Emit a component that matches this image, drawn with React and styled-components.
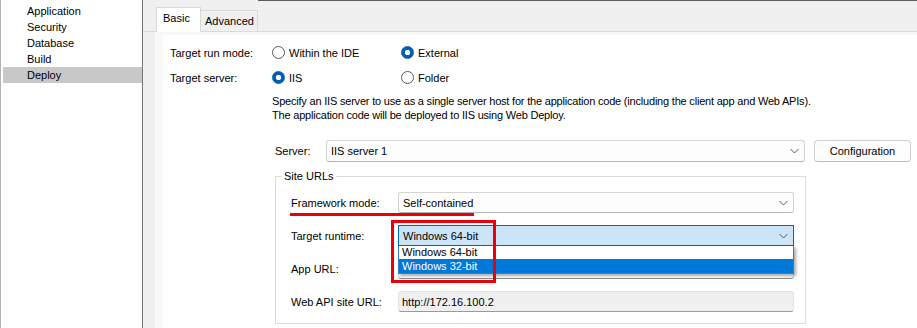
import React from 'react';
import styled, { createGlobalStyle } from 'styled-components';

const GlobalStyle = createGlobalStyle`
html, body {
  margin: 0;
  padding: 0;
}
body {
  font-family: "Liberation Sans", Arial, sans-serif;
  font-size: 11px;
  color: #000;
  background: #f0f0f0;
  overflow: hidden;
}
`;

const Page = styled.div`
display: flex;
width: 917px;
height: 328px;
`;

const Sidebar = styled.div`
flex: none;
width: 141px;
background: #fff;
border-left: 1px solid #b4b4b4;
border-right: 1px solid #767676;
padding-top: 3px;
`;

const NavItem = styled.div`
height: 16px;
line-height: 16px;
margin-left: 2px;
padding-left: 24px;
background: ${(p) => (p.$active ? '#c8c8c8' : 'transparent')};
`;

const Main = styled.div`
flex: 1;
min-width: 0;
display: flex;
flex-direction: column;
overflow: hidden;
`;

const TabStrip = styled.div`
display: flex;
align-items: flex-end;
height: 32px;
box-sizing: border-box;
padding-left: 13px;
border-bottom: 1px solid #dadada;
`;

const Tab = styled.div`
box-sizing: border-box;
position: relative;
width: ${(p) => p.$width}px;
height: ${(p) => (p.$active ? 25 : 21)}px;
margin-bottom: ${(p) => (p.$active ? -1 : 0)}px;
padding: 3px 0 0 ${(p) => p.$pad}px;
line-height: 14px;
background: ${(p) => (p.$active ? '#fff' : '#f0f0f0')};
border: 1px solid #d9d9d9;
border-bottom: none;
border-left: ${(p) => (p.$first ? '1px solid #d9d9d9' : 'none')};
`;

const StripFill = styled.div`
flex: 1;
align-self: stretch;
border-top: 1px solid #5c5c5c;
`;

const Panel = styled.div`
flex: 1;
display: flex;
margin-left: 12px;
padding: 3px 0 0 8px;
background: #f8f8f8;
`;

const Content = styled.div`
flex: 1;
background: #fff;
padding: 5px 0 0 7px;
`;

const OptionRow = styled.div`
display: grid;
grid-template-columns: 102px 129px auto;
align-items: center;
height: 25px;
`;

const Label = styled.span`
white-space: nowrap;
`;

const Radio = styled.label`
display: inline-flex;
align-items: center;
gap: 4px;
white-space: nowrap;
`;

const RadioDot = styled.span`
flex: none;
width: 13px;
height: 13px;
box-sizing: border-box;
border-radius: 50%;
border: 1px solid ${(p) => (p.$checked ? '#005fb8' : '#5a5a5a')};
background: ${(p) =>
  p.$checked ? 'radial-gradient(circle, #fff 0 2.4px, #005fb8 3px)' : '#fff'};
`;

const Description = styled.div`
margin: 4px 0 0 102px;
line-height: 14px;
letter-spacing: -0.2px;
white-space: nowrap;
`;

const ServerRow = styled.div`
display: flex;
align-items: center;
margin: 18px 0 0 105px;
height: 22px;
`;

const ServerLabel = styled.span`
width: 51px;
`;

const SelectBox = styled.div`
display: flex;
align-items: center;
justify-content: space-between;
box-sizing: border-box;
width: ${(p) => (p.$width ? `${p.$width}px` : '100%')};
height: ${(p) => p.$height || 21}px;
padding: 0 5px 0 4px;
border: 1px solid ${(p) => (p.$focused ? '#0067c0' : '#d4d4d4')};
border-bottom-color: ${(p) => (p.$focused ? '#0067c0' : '#b4b4b4')};
border-radius: ${(p) => (p.$focused ? 0 : 3)}px;
background: ${(p) => (p.$focused ? '#cce4f7' : '#fdfdfd')};
`;

const Chevron = () => (
  <svg width="9" height="6" viewBox="0 0 9 6">
    <polyline points="0.5,1 4.5,5 8.5,1" fill="none" stroke="#5a5a5a" strokeWidth="1" />
  </svg>
);

const Button = styled.button`
margin-left: 9px;
width: 97px;
height: 22px;
box-sizing: border-box;
border: 1px solid #d0d0d0;
border-bottom-color: #bdbdbd;
border-radius: 4px;
background: #fdfdfd;
font: inherit;
color: #000;
padding: 0;
`;

const Group = styled.fieldset`
margin: 8px 0 0 105px;
width: 531px;
box-sizing: border-box;
border: 1px solid #dcdcdc;
padding: 0 10px 11px 6px;
`;

const Legend = styled.legend`
padding: 0 2px;
line-height: 13px;
`;

const GroupGrid = styled.div`
position: relative;
display: grid;
grid-template-columns: 107px 396px;
grid-auto-rows: 21px;
row-gap: 12px;
align-items: center;
margin: 9px 0 0 9px;
`;

const Field = styled.div`
position: relative;
height: 100%;
`;

const TextBox = styled.div`
display: flex;
align-items: center;
box-sizing: border-box;
height: 100%;
padding-left: 3px;
border: 1px solid ${(p) => (p.$readOnly ? '#e4e4e4' : '#d4d4d4')};
border-bottom-color: ${(p) => (p.$readOnly ? '#9a9a9a' : '#8a8a8a')};
border-radius: 3px;
background: ${(p) => (p.$readOnly ? '#f0f0f0' : '#fff')};
`;

const DropList = styled.div`
position: absolute;
top: 100%;
left: 0;
right: 0;
z-index: 2;
background: #fff;
border: 1px solid #3c7fc6;
border-top: none;
box-shadow: 2px 2px 3px rgba(0, 0, 0, 0.35);
`;

const DropItem = styled.div`
height: ${(p) => p.$h}px;
line-height: ${(p) => p.$h}px;
padding-left: 3px;
background: ${(p) => (p.$selected ? '#0078d7' : '#fff')};
color: ${(p) => (p.$selected ? '#fff' : '#000')};
`;

const RedUnderline = styled.div`
position: absolute;
left: -1px;
top: 21px;
width: 184px;
height: 3px;
background: #e8000b;
`;

const RedFrame = styled.div`
position: absolute;
left: 100px;
top: 28px;
width: 105px;
height: 63px;
box-sizing: border-box;
border: 3px solid #e8000b;
z-index: 3;
`;

const navItems = ['Application', 'Security', 'Database', 'Build', 'Deploy'];

export default function App() {
  return (
    <>
      <GlobalStyle />
      <Page>
        <Sidebar>
          {navItems.map((item) => (
            <NavItem key={item} $active={item === 'Deploy'}>{item}</NavItem>
          ))}
        </Sidebar>
        <Main>
          <TabStrip>
            <Tab $active $first $width={45} $pad={6}>Basic</Tab>
            <Tab $width={57} $pad={4}>Advanced</Tab>
            <StripFill />
          </TabStrip>
          <Panel>
            <Content>
              <OptionRow>
                <Label>Target run mode:</Label>
                <Radio><RadioDot />Within the IDE</Radio>
                <Radio><RadioDot $checked />External</Radio>
              </OptionRow>
              <OptionRow>
                <Label>Target server:</Label>
                <Radio><RadioDot $checked />IIS</Radio>
                <Radio><RadioDot />Folder</Radio>
              </OptionRow>
              <Description>
                Specify an IIS server to use as a single server host for the application code (including the client app and Web APIs).
                <br />
                The application code will be deployed to IIS using Web Deploy.
              </Description>
              <ServerRow>
                <ServerLabel>Server:</ServerLabel>
                <SelectBox $width={479} $height={22}>
                  <span>IIS server 1</span>
                  <Chevron />
                </SelectBox>
                <Button>Configuration</Button>
              </ServerRow>
              <Group>
                <Legend>Site URLs</Legend>
                <GroupGrid>
                  <Label>Framework mode:</Label>
                  <SelectBox>
                    <span>Self-contained</span>
                    <Chevron />
                  </SelectBox>
                  <Label>Target runtime:</Label>
                  <Field>
                    <SelectBox $focused>
                      <span>Windows 64-bit</span>
                      <Chevron />
                    </SelectBox>
                    <DropList>
                      <DropItem $h={13}>Windows 64-bit</DropItem>
                      <DropItem $h={14} $selected>Windows 32-bit</DropItem>
                    </DropList>
                  </Field>
                  <Label>App URL:</Label>
                  <TextBox />
                  <Label>Web API site URL:</Label>
                  <TextBox $readOnly>http://172.16.100.2</TextBox>
                  <RedUnderline />
                  <RedFrame />
                </GroupGrid>
              </Group>
            </Content>
          </Panel>
        </Main>
      </Page>
    </>
  );
}
